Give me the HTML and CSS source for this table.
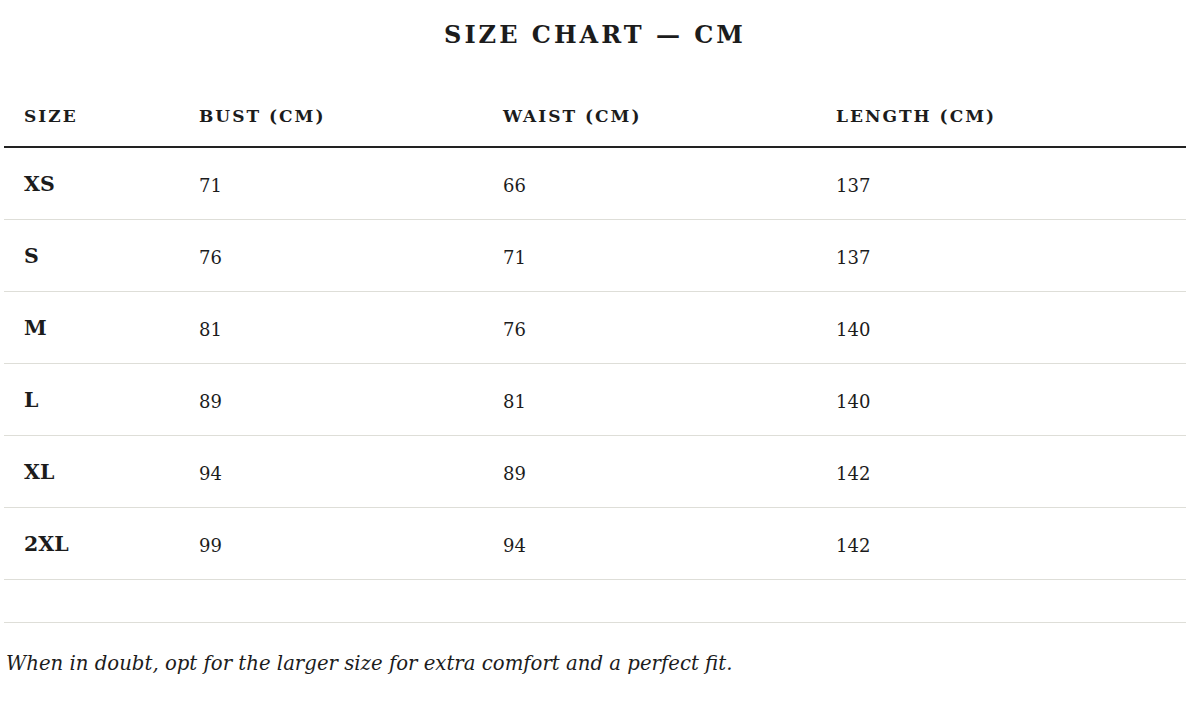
FILE: index.html
```html
<!DOCTYPE html>
<html lang="en">
<head>
<meta charset="utf-8">
<title>Size Chart</title>
<link rel="stylesheet" href="styles.css">
</head>
<body>
<div class="page">
  <h1 class="title">SIZE CHART — CM</h1>
  <div class="chart">
    <div class="row head">
      <div class="cell">SIZE</div>
      <div class="cell">BUST (CM)</div>
      <div class="cell">WAIST (CM)</div>
      <div class="cell">LENGTH (CM)</div>
    </div>
    <div class="row"><div class="cell size">XS</div><div class="cell num">71</div><div class="cell num">66</div><div class="cell num">137</div></div>
    <div class="row"><div class="cell size">S</div><div class="cell num">76</div><div class="cell num">71</div><div class="cell num">137</div></div>
    <div class="row"><div class="cell size">M</div><div class="cell num">81</div><div class="cell num">76</div><div class="cell num">140</div></div>
    <div class="row"><div class="cell size">L</div><div class="cell num">89</div><div class="cell num">81</div><div class="cell num">140</div></div>
    <div class="row"><div class="cell size">XL</div><div class="cell num">94</div><div class="cell num">89</div><div class="cell num">142</div></div>
    <div class="row"><div class="cell size">2XL</div><div class="cell num">99</div><div class="cell num">94</div><div class="cell num">142</div></div>
    <div class="spacer"></div>
  </div>
  <p class="note">When in doubt, opt for the larger size for extra comfort and a perfect fit.</p>
</div>
</body>
</html>
```
FILE: styles.css
```css
html, body {
  margin: 0;
  padding: 0;
  background: #ffffff;
}

.page {
  width: 1182px;
  margin-left: 4px;
  font-family: "DejaVu Serif", "Liberation Serif", serif;
  color: #1c1c1c;
}

.title {
  margin: 20px 0 0;
  height: 30px;
  line-height: 30px;
  text-align: center;
  font-size: 24px;
  font-weight: bold;
  letter-spacing: 3px;
}

.chart {
  margin-top: 36px;
}

.row {
  display: grid;
  grid-template-columns: 175px 304px 333px 1fr;
  align-items: center;
  height: 71px;
  border-bottom: 1px solid #deded8;
  font-size: 18px;
}

.row.head {
  height: 60px;
  border-bottom: 2px solid #222222;
  font-size: 17px;
  font-weight: bold;
  letter-spacing: 2px;
}

.cell {
  padding-left: 20px;
  line-height: 24px;
}

.cell.num {
  padding-top: 5px;
  font-variant-numeric: oldstyle-nums;
}

.cell.size {
  font-weight: bold;
  font-size: 20.5px;
}

.spacer {
  height: 42px;
  border-bottom: 1px solid #deded8;
}

.note {
  margin: 27px 0 0 2px;
  font-size: 19.7px;
  font-style: italic;
  line-height: 28px;
}
```
